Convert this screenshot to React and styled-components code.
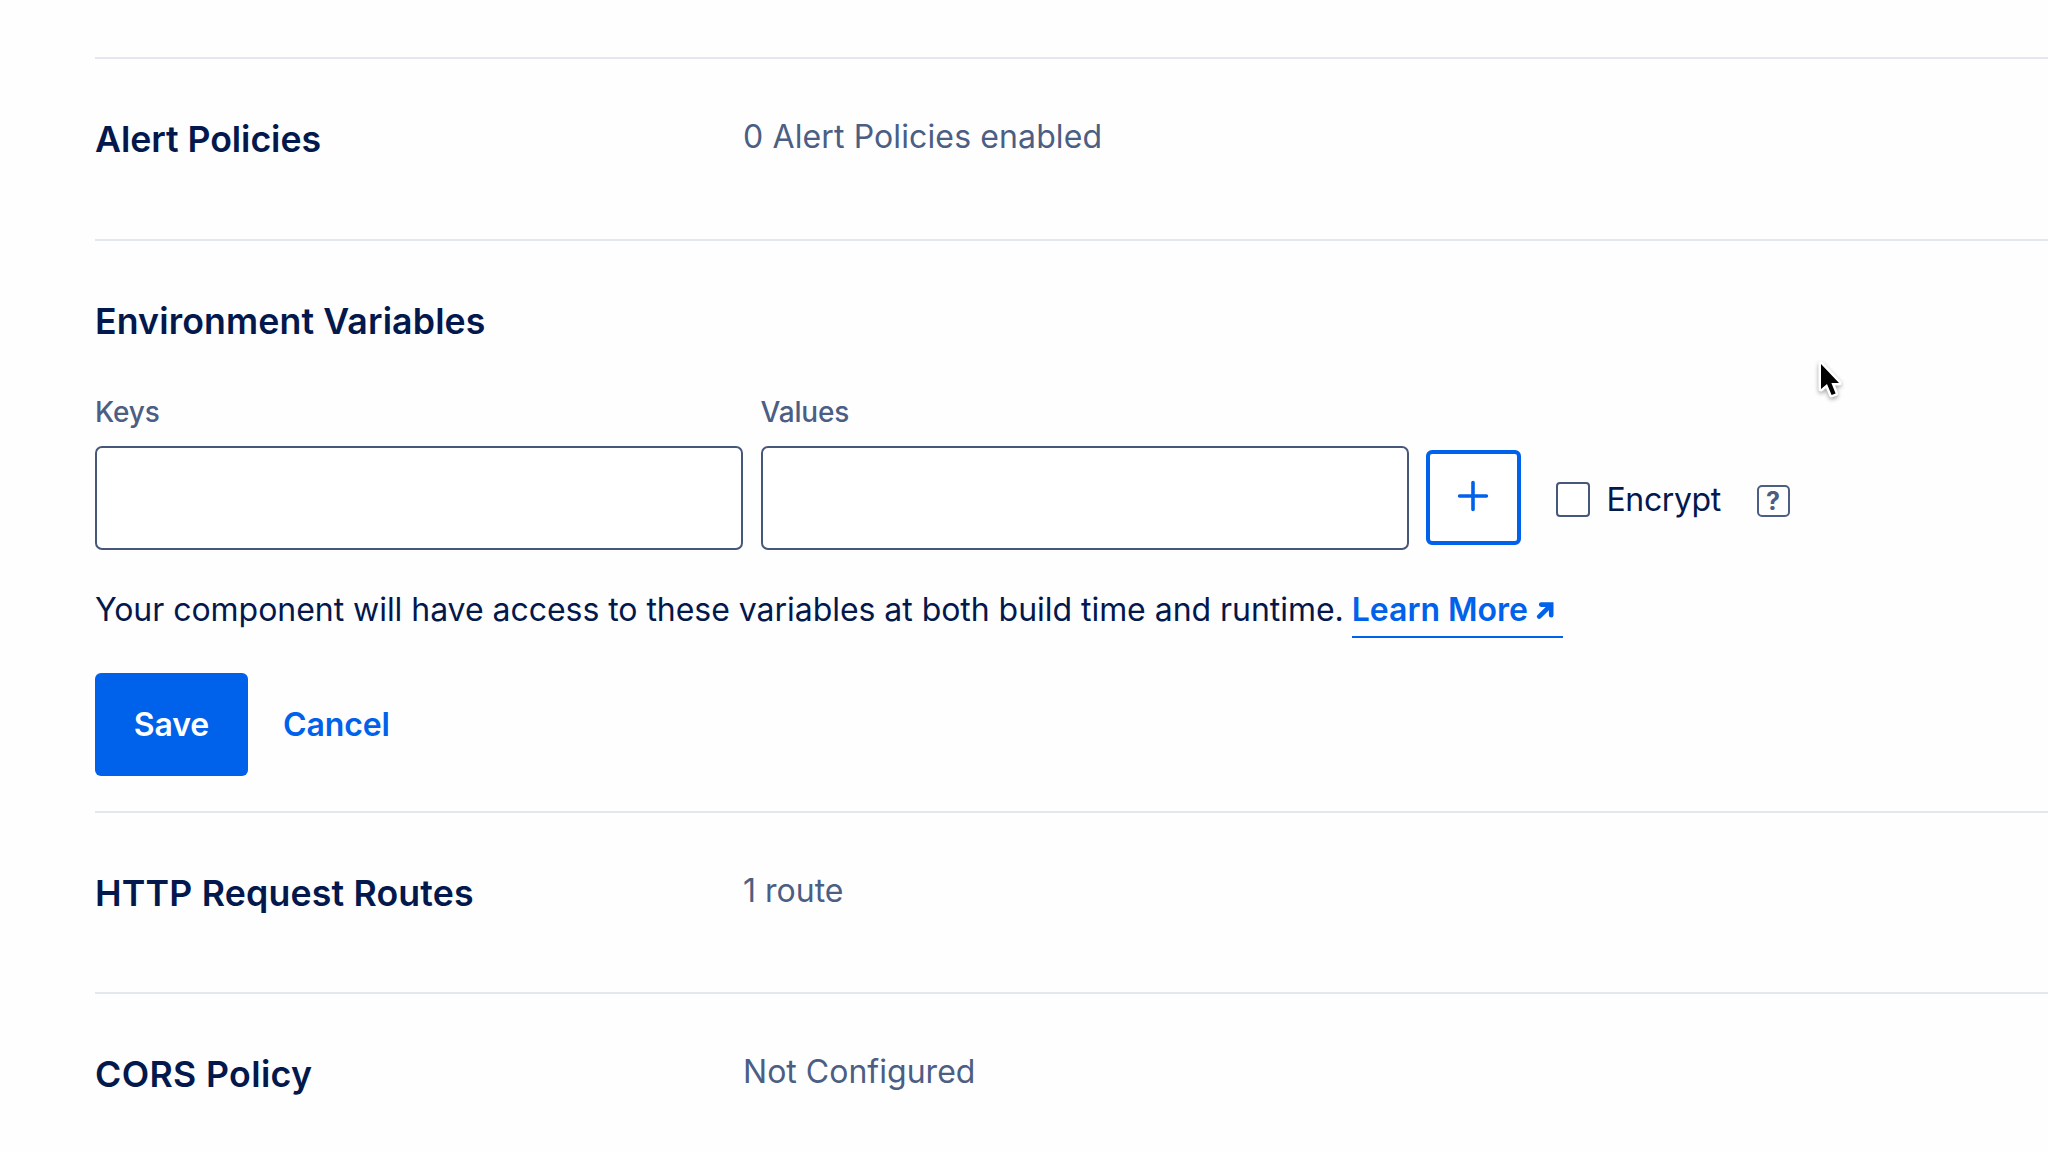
import React from 'react';
import styled, { createGlobalStyle } from 'styled-components';

const ink = '#03184c';
const muted = '#4c5e84';
const blue = '#0061eb';
const line = '#e4e8ee';

const GlobalStyle = createGlobalStyle`
  *, *::before, *::after { box-sizing: border-box; }
  html, body { margin: 0; height: 100%; overflow: hidden; }
  body {
    background: #fefefe;
    color: ${ink};
    font-family: Inter, 'Open Sans', sans-serif;
    font-size: 32px;
    line-height: 44px;
  }
`;

const Page = styled.main`
  height: 1152px;
  overflow: hidden;
  padding: 57px 0 0 95px;
`;

const Section = styled.section`
  border-top: 2px solid ${line};
  padding-top: 58px;
  height: ${(p) => p.$height}px;
`;

const SummaryRow = styled(Section)`
  display: grid;
  grid-template-columns: 648px 1fr;
  align-items: start;
`;

const Title = styled.h2`
  margin: 0;
  font-size: 35.7px;
  font-weight: 600;
  line-height: 44px;
  letter-spacing: ${(p) => p.$track}px;
  white-space: nowrap;
`;

const Summary = styled.p`
  margin: -2px 0 0;
  color: ${muted};
  letter-spacing: ${(p) => p.$track}px;
  white-space: nowrap;
`;

const Fields = styled.div`
  display: flex;
  align-items: flex-end;
  gap: 17.5px;
  margin-top: 52px;
`;

const Field = styled.label`
  display: flex;
  flex-direction: column;
  gap: 17px;
  width: 648px;
`;

const FieldLabel = styled.span`
  color: ${muted};
  font-size: 28px;
  font-weight: 500;
  line-height: 34px;
  letter-spacing: -0.15px;
`;

const TextInput = styled.input`
  width: 100%;
  height: 103.5px;
  padding: 0 24px;
  border: 2px solid #465779;
  border-radius: 7px;
  background: #fff;
  color: inherit;
  font: inherit;
  outline: none;
`;

const AddButton = styled.button`
  display: flex;
  align-items: center;
  justify-content: center;
  width: 95px;
  height: 95px;
  margin-bottom: 4.5px;
  padding: 0 1px 4px 0;
  border: 4px solid ${blue};
  border-radius: 6px;
  background: #fff;
  color: ${blue};
`;

const EncryptGroup = styled.div`
  display: flex;
  align-items: center;
  height: 103.5px;
  margin-left: 17px;
`;

const CheckLabel = styled.label`
  display: flex;
  align-items: center;
  gap: 16.5px;
  padding-top: 3px;
`;

const Checkbox = styled.input`
  appearance: none;
  width: 34.5px;
  height: 34.5px;
  margin: 0;
  border: 2px solid #465779;
  border-radius: 4px;
  background: #fff;
`;

const CheckText = styled.span`
  width: 115px;
  padding-top: 2px;
  letter-spacing: -0.37px;
`;

const Hint = styled.span`
  width: 33px;
  height: 32px;
  margin: 6px 0 0 35px;
  border: 2px solid ${muted};
  border-radius: 5px;
  color: ${muted};
  font-size: 25px;
  font-weight: 700;
  line-height: 28px;
  text-align: center;
`;

const Note = styled.p`
  display: flex;
  align-items: flex-start;
  gap: 8px;
  margin: 38.5px 0 0;
  white-space: nowrap;
`;

const NoteText = styled.span`
  letter-spacing: -0.04px;
`;

const LearnMore = styled.a`
  display: inline-flex;
  align-items: center;
  gap: 8px;
  width: 211px;
  height: 50px;
  padding-bottom: 4px;
  border-bottom: 2px solid ${blue};
  color: ${blue};
  font-weight: 600;
  letter-spacing: 0;
  text-decoration: none;
`;

const Actions = styled.div`
  display: flex;
  align-items: center;
  gap: 35px;
  margin-top: 35px;
`;

const Button = styled.button`
  height: 103px;
  width: ${(p) => (p.$primary ? '153px' : 'auto')};
  padding: 0;
  border: 0;
  border-radius: 6px;
  background: ${(p) => (p.$primary ? blue : 'transparent')};
  color: ${(p) => (p.$primary ? '#fff' : blue)};
  font: inherit;
  font-weight: 600;
  letter-spacing: -0.1px;
`;

const Pointer = styled.svg`
  position: absolute;
  left: 1811px;
  top: 356px;
  width: 40px;
  height: 48px;
  filter: drop-shadow(0 2px 2px rgba(0, 0, 0, 0.35));
  pointer-events: none;
`;

function PlusIcon() {
  return (
    <svg width="32" height="32" viewBox="0 0 32 32" fill="none" stroke="currentColor" strokeWidth="3.6" strokeLinecap="round">
      <path d="M16 2.6v26.8M2.6 16h26.8" />
    </svg>
  );
}

function ArrowIcon() {
  return (
    <svg width="19" height="19" viewBox="0 0 19 19" fill="none" stroke="currentColor" strokeWidth="4.6">
      <path d="M5.2 3.6H15.2V14.2" strokeLinejoin="miter" strokeLinecap="round" />
      <path d="M14.6 4.4L3.2 15.6" strokeLinecap="round" />
    </svg>
  );
}

export default function App() {
  return (
    <>
      <GlobalStyle />
      <Page>
        <SummaryRow $height={182}>
          <Title $track={-0.06}>Alert Policies</Title>
          <Summary $track={0.12}>0 Alert Policies enabled</Summary>
        </SummaryRow>

        <Section $height={572}>
          <Title $track={0.13}>Environment Variables</Title>
          <Fields>
            <Field>
              <FieldLabel>Keys</FieldLabel>
              <TextInput type="text" />
            </Field>
            <Field>
              <FieldLabel>Values</FieldLabel>
              <TextInput type="text" />
            </Field>
            <AddButton type="button" aria-label="Add variable">
              <PlusIcon />
            </AddButton>
            <EncryptGroup>
              <CheckLabel>
                <Checkbox type="checkbox" />
                <CheckText>Encrypt</CheckText>
              </CheckLabel>
              <Hint>?</Hint>
            </EncryptGroup>
          </Fields>
          <Note>
            <NoteText>Your component will have access to these variables at both build time and runtime.</NoteText>
            <LearnMore href="#">
              Learn More
              <ArrowIcon />
            </LearnMore>
          </Note>
          <Actions>
            <Button type="button" $primary>Save</Button>
            <Button type="button">Cancel</Button>
          </Actions>
        </Section>

        <SummaryRow $height={181}>
          <Title $track={0.18}>HTTP Request Routes</Title>
          <Summary $track={0}>1 route</Summary>
        </SummaryRow>

        <SummaryRow $height={181}>
          <Title $track={0.36}>CORS Policy</Title>
          <Summary $track={0.02}>Not Configured</Summary>
        </SummaryRow>
      </Page>
      <Pointer viewBox="0 0 40 48" aria-hidden="true">
        <path
          d="M10 8V33L16 28L20.6 39L24.6 37.4L20.4 27H28Z"
          fill="#000"
          stroke="#fff"
          strokeWidth="5"
          strokeLinejoin="round"
          paintOrder="stroke"
        />
      </Pointer>
    </>
  );
}
